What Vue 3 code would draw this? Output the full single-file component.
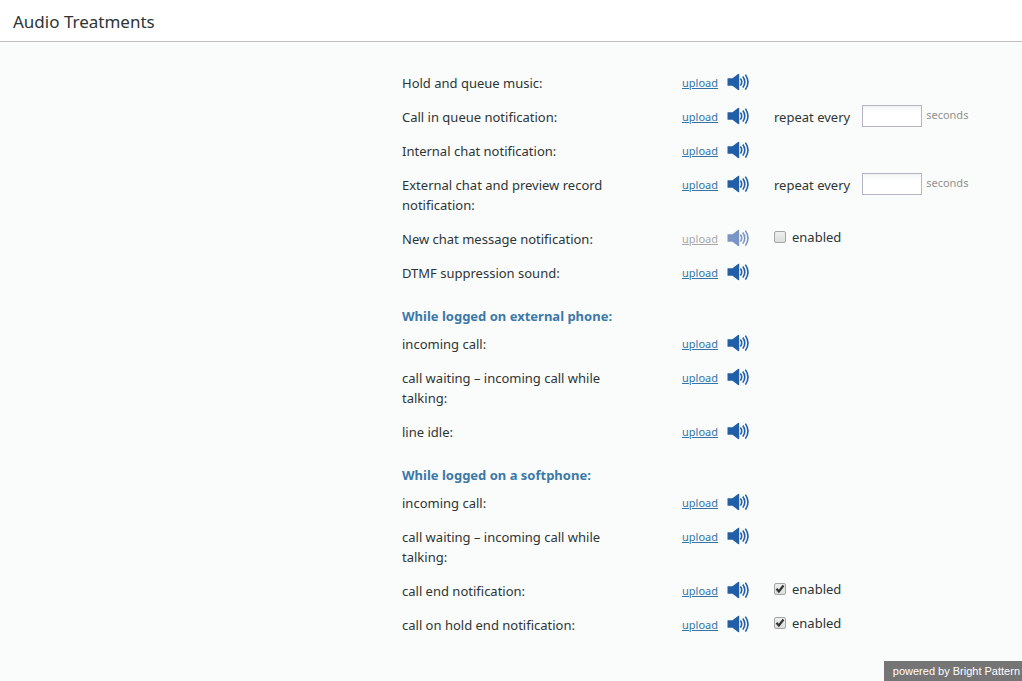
<script setup>
import { reactive } from 'vue'

const groups = reactive([
  {
    title: '',
    rows: [
      { id: 'hold', label: 'Hold and queue music:' },
      { id: 'queue', label: 'Call in queue notification:', repeat: '' },
      { id: 'internal', label: 'Internal chat notification:' },
      { id: 'external', label: 'External chat and preview record notification:', repeat: '' },
      { id: 'message', label: 'New chat message notification:', enabled: false },
      { id: 'dtmf', label: 'DTMF suppression sound:' },
    ],
  },
  {
    title: 'While logged on external phone:',
    rows: [
      { id: 'ext-incoming', label: 'incoming call:' },
      { id: 'ext-waiting', label: 'call waiting – incoming call while talking:' },
      { id: 'ext-idle', label: 'line idle:' },
    ],
  },
  {
    title: 'While logged on a softphone:',
    rows: [
      { id: 'soft-incoming', label: 'incoming call:' },
      { id: 'soft-waiting', label: 'call waiting – incoming call while talking:' },
      { id: 'soft-end', label: 'call end notification:', enabled: true },
      { id: 'soft-hold', label: 'call on hold end notification:', enabled: true },
    ],
  },
])
</script>

<template>
  <div class="page">
    <header class="header">
      <h1>Audio Treatments</h1>
    </header>
    <main class="content">
      <section v-for="group in groups" :key="group.title" class="group">
        <h2 v-if="group.title">{{ group.title }}</h2>
        <div
          v-for="row in group.rows"
          :key="row.id"
          class="row"
          :class="{ off: row.enabled === false }"
        >
          <span :id="row.id" class="label">{{ row.label }}</span>
          <a href="#" class="upload" :aria-describedby="row.id">upload</a>
          <button type="button" class="play" aria-label="Play" :aria-describedby="row.id">
            <svg width="22" height="18" viewBox="0 0 22 18">
              <path d="M0.5 5.2H5.5L11 1L12.2 0.8V17.2L11 17L5.5 12.8H0.5Z" fill="currentColor" />
              <g fill="none" stroke="currentColor" stroke-width="1.6">
                <path d="M13.4 5.6Q16 9 13.4 12.6" />
                <path d="M15.8 3.6Q19.8 9 15.8 14.6" />
                <path d="M18.4 1.6Q23.6 9 18.4 16.6" />
              </g>
            </svg>
          </button>
          <div v-if="row.repeat !== undefined" class="repeat">
            <label :for="row.id + '-sec'">repeat every</label>
            <input :id="row.id + '-sec'" v-model="row.repeat" type="text" />
            <span class="unit">seconds</span>
          </div>
          <label v-else-if="row.enabled !== undefined" class="enabled">
            <input v-model="row.enabled" type="checkbox" />
            <svg class="box" width="12" height="12" viewBox="0 0 12 12">
              <path v-if="row.enabled" d="M1.8 5.8L4.6 9L10.2 1.8" fill="none" stroke="#333" stroke-width="2.6" />
            </svg>
            <span>enabled</span>
          </label>
        </div>
      </section>
    </main>
    <footer class="powered">powered by Bright Pattern</footer>
  </div>
</template>

<style>
body {
  background: #fafcfc;
}
</style>

<style scoped>
.page {
  min-height: 100vh;
  font: 13px/20px "Noto Sans", "Open Sans", sans-serif;
  color: #2d3535;
}
.header {
  padding: 10px 13px 7px;
  background: #fff;
  border-bottom: 1px solid #bdbdbd;
}
h1 {
  margin: 0;
  font: 17px/24px "Noto Sans", sans-serif;
}
.content {
  padding: 31px 0 46px 402px;
}
.group + .group {
  margin-top: 23px;
}
h2 {
  margin: 0 0 8px;
  font-size: 13px;
  line-height: 20px;
  color: #3c78a8;
}
.row {
  display: grid;
  grid-template-columns: 272px 37px 22px auto;
  column-gap: 8px;
  justify-content: start;
  align-items: start;
}
.row + .row {
  margin-top: 14px;
}
.label {
  max-width: 230px;
}
.upload {
  font-size: 11px;
  color: #3474a8;
}
.play {
  display: flex;
  padding: 0;
  border: 0;
  background: none;
  color: #205fa8;
}
.off .upload {
  color: #a9a9a4;
}
.off .play {
  color: #7995c8;
}
.repeat,
.enabled {
  display: flex;
  margin-left: 17px;
}
.repeat {
  height: 20px;
}
.repeat input {
  box-sizing: border-box;
  width: 60px;
  height: 22px;
  margin: -2px 4px 0 12px;
  padding: 2px 4px;
  border: 1px solid #b5b5c7;
  background: linear-gradient(#f2f4f4, #fff 6px);
  font: inherit;
}
.unit {
  margin-top: -2px;
  font-size: 11px;
  color: #92928e;
}
.enabled {
  position: relative;
  align-items: center;
  gap: 6px;
  margin-top: -2px;
}
.enabled input {
  position: absolute;
  left: 0;
  width: 12px;
  height: 12px;
  margin: 0;
  opacity: 0;
}
.box {
  box-sizing: border-box;
  overflow: visible;
  border: 1px solid #a5a5a5;
  border-radius: 2px;
  background: linear-gradient(#eee, #dcdcdc);
}
.powered {
  position: fixed;
  right: 0;
  bottom: 0;
  padding: 0 2px 0 9px;
  background: #757575;
  color: #fff;
  font: 11px/20px "Liberation Sans", Arial, sans-serif;
}
</style>
